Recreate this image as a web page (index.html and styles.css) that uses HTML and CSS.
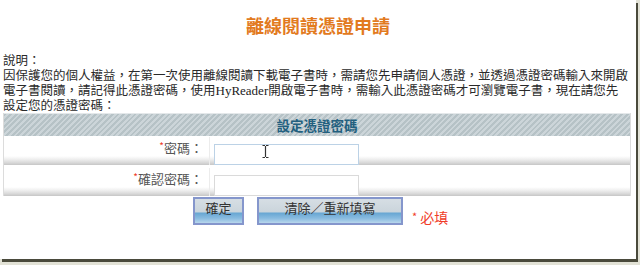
FILE: index.html
```html
<!DOCTYPE html>
<html lang="zh-Hant">
<head>
<meta charset="utf-8">
<title>離線閱讀憑證申請</title>
<link rel="stylesheet" href="styles.css">
</head>
<body>
<div class="frame">
  <h1 class="title">離線閱讀憑證申請</h1>
  <div class="desc">
    <div class="line">說明：</div>
    <div class="line">因保護您的個人權益，在第一次使用離線閱讀下載電子書時，需請您先申請個人憑證，並透過憑證密碼輸入來開啟</div>
    <div class="line">電子書閱讀，請記得此憑證密碼，使用<span class="latin">HyReader</span>開啟電子書時，需輸入此憑證密碼才可瀏覽電子書，現在請您先</div>
    <div class="line">設定您的憑證密碼：</div>
  </div>
  <div class="panel">
    <div class="panel-head">設定憑證密碼</div>
    <div class="row">
      <div class="label"><span class="req">*</span>密碼：</div>
      <div class="field">
        <input class="input focus" type="password">
        <svg class="ibeam" width="7" height="13" viewBox="0 0 7 13"><path d="M0.5 0.5h2.5M4 0.5h2.5M3.5 1v11M0.5 12.5h2.5M4 12.5h2.5" stroke="#333" stroke-width="1.2" fill="none"/></svg>
      </div>
    </div>
    <div class="row row-second">
      <div class="label"><span class="req">*</span>確認密碼：</div>
      <div class="field">
        <input class="input" type="password">
      </div>
    </div>
  </div>
  <div class="actions">
    <button class="btn btn-ok" type="button">確定</button>
    <button class="btn btn-reset" type="button">清除／重新填寫</button>
    <span class="required"><span class="star">*</span> 必填</span>
  </div>
</div>
</body>
</html>
```
FILE: styles.css
```css
html, body {
  margin: 0;
  padding: 0;
}
body {
  width: 640px;
  height: 265px;
  background: #e2e2d6;
  font-family: "Noto Sans CJK TC", "Noto Sans CJK SC", sans-serif;
  overflow: hidden;
}
.frame {
  width: 636px;
  height: 259px;
  background: #ffffff;
  box-shadow: 2px 3px 0 #4a4a3c;
  display: flex;
  flex-direction: column;
  overflow: hidden;
}
.title {
  margin: 14px 0 0 0;
  font-size: 18px;
  line-height: 22px;
  font-weight: bold;
  color: #e27a1e;
  text-align: center;
}
.desc {
  margin: 16px 0 0 0;
  padding-left: 3px;
  font-size: 12.5px;
  color: #2a2a2a;
  white-space: nowrap;
}
.line {
  height: 15px;
  line-height: 15px;
}
.latin {
  font-family: "Liberation Serif", serif;
  font-size: 13px;
  color: #222;
}
.panel {
  margin: 1px 0 0 3px;
  width: 626px;
  border: 1px solid #dcdcdc;
  border-top: none;
  border-bottom: none;
}
.panel-head {
  height: 22px;
  line-height: 22px;
  text-align: center;
  font-size: 13.5px;
  font-weight: bold;
  color: #23607f;
  background: repeating-linear-gradient(135deg, #b6c2c6 0, #b6c2c6 2px, #ccd5d9 2px, #ccd5d9 4px);
  border-top: 1px solid #e4e8ea;
}
.row {
  display: flex;
  height: 28px;
  margin-top: 1px;
  background: linear-gradient(to bottom, #ffffff 0, #ffffff 68%, #eeeeee 80%, #d8d8d8 92%, #c6c6c6 100%);
}
.row-second {
  margin-top: 3px;
}
.label {
  width: 199px;
  padding-right: 6px;
  padding-top: 1px;
  text-align: right;
  font-size: 13px;
  line-height: 16px;
  color: #555555;
  border-right: 1px solid #ececec;
}
.req {
  color: #ee3a26;
  font-size: 10px;
  vertical-align: 3px;
}
.field {
  position: relative;
  padding: 3px 0 0 4px;
}
.input {
  box-sizing: border-box;
  width: 145px;
  height: 21px;
  margin: 0;
  border: 1px solid #dadada;
  background: #ffffff;
  outline: none;
}
.input.focus {
  border-color: #bcd2e6;
}
.ibeam {
  position: absolute;
  left: 52px;
  top: 8px;
}
.actions {
  display: flex;
  align-items: flex-start;
  margin: 1px 0 0 193px;
}
.btn {
  box-sizing: border-box;
  height: 28px;
  margin: 0;
  padding: 0 0 6px 0;
  border: 2px solid #8596cc;
  font-family: "Noto Sans CJK TC", sans-serif;
  font-size: 13px;
  line-height: 18px;
  color: #333333;
  background: linear-gradient(to bottom, #d6dee4 0, #cbd5dc 52%, #6aa8d4 60%, #88bbe0 80%, #b8d6ec 100%);
}
.btn-ok {
  width: 51px;
}
.btn-reset {
  width: 146px;
  margin-left: 13px;
}
.required {
  margin: 11px 0 0 9px;
  font-size: 14px;
  line-height: 16px;
  color: #f03c28;
}
.star {
  font-size: 11px;
  vertical-align: 2px;
}
```
